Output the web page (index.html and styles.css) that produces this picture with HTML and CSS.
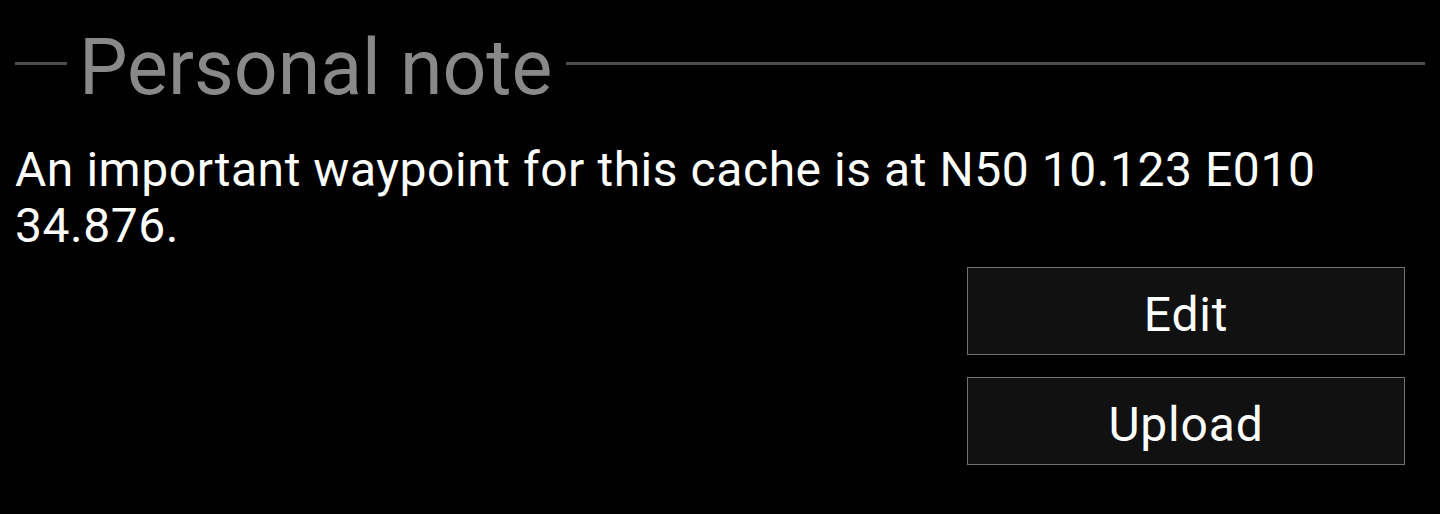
FILE: index.html
```html
<!DOCTYPE html>
<html>
<head>
<meta charset="utf-8">
<link rel="stylesheet" href="styles.css">
</head>
<body>
<div class="page">
  <div class="header">
    <span class="line line-left"></span>
    <span class="title">Personal note</span>
    <span class="line line-right"></span>
  </div>
  <p class="note">An important waypoint for this cache is at N50 10.123 E010 34.876.</p>
  <div class="actions">
    <button class="btn">Edit</button>
    <button class="btn">Upload</button>
  </div>
</div>
</body>
</html>
```
FILE: styles.css
```css
html, body {
  margin: 0;
  padding: 0;
  background: #000;
}
.page {
  padding: 23px 15px 0 15px;
  font-family: Roboto, "Liberation Sans", sans-serif;
}
.header {
  display: flex;
  align-items: center;
  height: 90px;
}
.line {
  height: 3px;
  background: #4d4d4d;
  margin-bottom: 9px;
}
.line-left {
  width: 52px;
  flex: none;
}
.line-right {
  flex: 1;
}
.title {
  font-size: 77px;
  line-height: 90px;
  color: #898989;
  margin: 0 14px 0 12px;
  white-space: nowrap;
}
.note {
  margin: 29px 0 0 0;
  font-size: 48px;
  line-height: 56px;
  letter-spacing: 0.55px;
  color: #fff;
  padding-right: 100px;
}
.actions {
  display: flex;
  flex-direction: column;
  align-items: flex-end;
  gap: 22px;
  margin-top: 13px;
  padding-right: 20px;
}
.btn {
  width: 438px;
  height: 88px;
  box-sizing: border-box;
  background: #111;
  border: 1px solid #707070;
  color: #fff;
  font-family: Roboto, "Liberation Sans", sans-serif;
  font-size: 48px;
  letter-spacing: 0.8px;
  padding: 6px 0 0 0;
  display: flex;
  align-items: center;
  justify-content: center;
}
```
